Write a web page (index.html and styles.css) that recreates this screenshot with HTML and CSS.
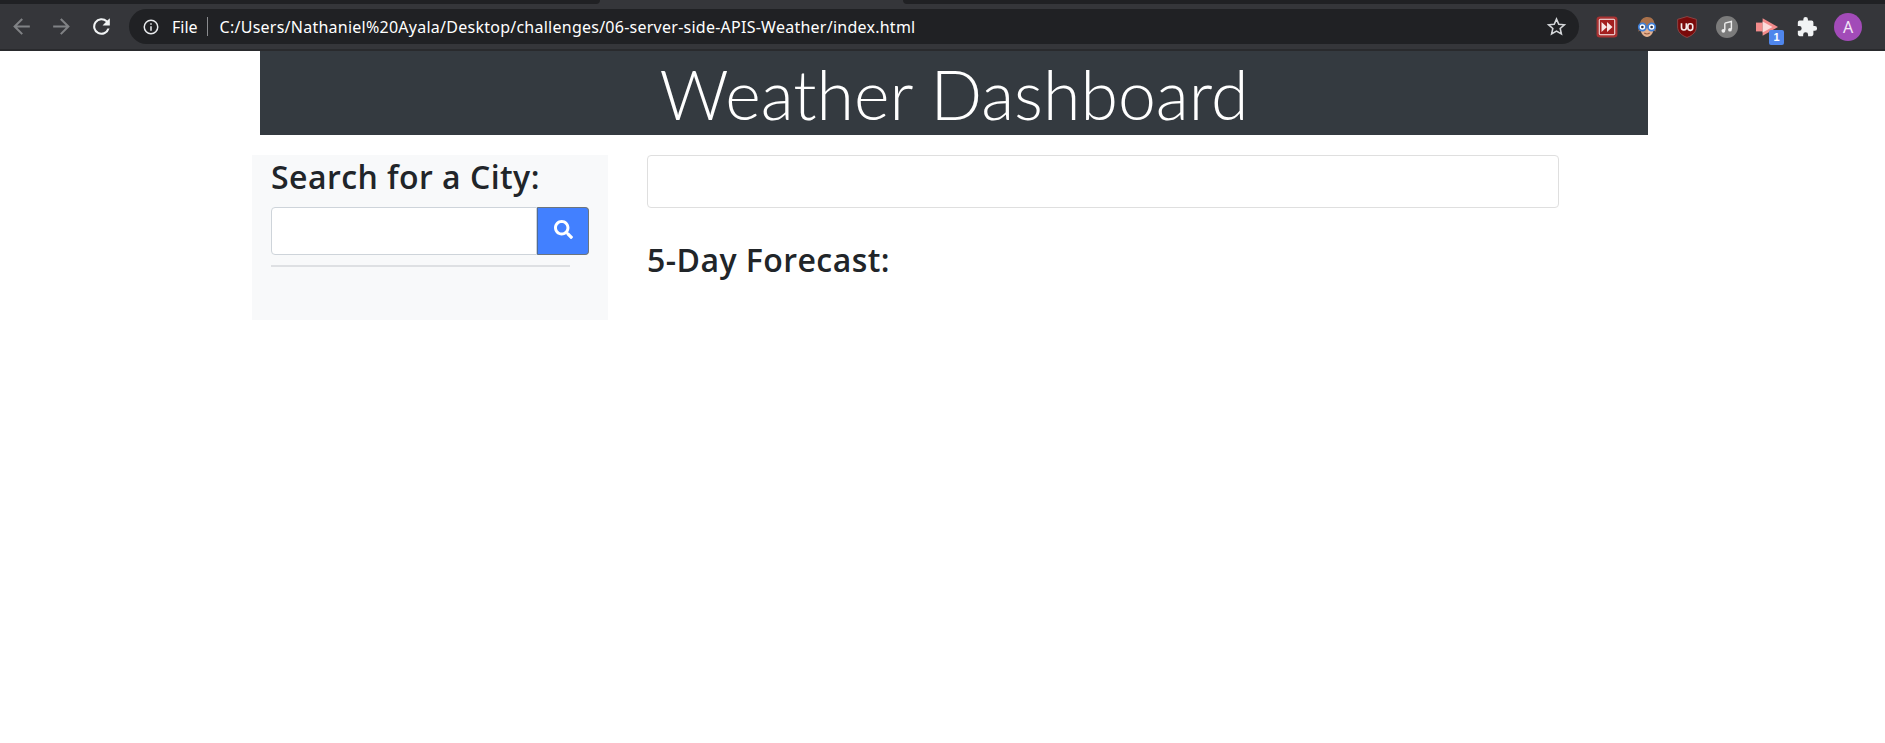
FILE: index.html
```html
<!DOCTYPE html>
<html lang="en">
<head>
    <meta charset="UTF-8">
    <title>Weather Dashboard</title>
    <link rel="stylesheet" href="styles.css">
</head>
<body>
    <div class="tabstrip">
        <div class="tab-side left"></div>
        <div class="tab-side right"></div>
    </div>
    <div class="toolbar">
        <svg class="nav-icon dim" viewBox="0 0 24 24"><path d="M20 11H7.8l5.6-5.6L12 4l-8 8 8 8 1.4-1.4L7.8 13H20z"/></svg>
        <svg class="nav-icon dim" viewBox="0 0 24 24"><path d="M4 11h12.2l-5.6-5.6L12 4l8 8-8 8-1.4-1.4 5.6-5.6H4z"/></svg>
        <svg class="nav-icon" viewBox="0 0 24 24"><path d="M17.65 6.35A8 8 0 1 0 19.73 14h-2.08a6 6 0 1 1-1.41-6.24L13 11h7V4z"/></svg>
        <div class="omnibox">
            <svg class="info-icon" viewBox="0 0 24 24"><path d="M11 7h2v2h-2zm0 4h2v6h-2zm1-9a10 10 0 1 0 0 20 10 10 0 0 0 0-20zm0 18a8 8 0 1 1 0-16 8 8 0 0 1 0 16z"/></svg>
            <span class="scheme">File</span>
            <span class="divider"></span>
            <span class="url">C:/Users/Nathaniel%20Ayala/Desktop/challenges/06-server-side-APIS-Weather/index.html</span>
            <svg class="star-icon" viewBox="0 0 24 24"><path d="M12 3.5l2.6 5.9 6.4.6-4.8 4.2 1.4 6.3L12 17.2l-5.6 3.3 1.4-6.3L3 10l6.4-.6z"/></svg>
        </div>
        <div class="extensions">
            <svg class="ext" viewBox="0 0 20 20"><rect x="0.5" y="0.5" width="19" height="19" rx="3" fill="#a83232"/><rect x="2.5" y="2.5" width="15" height="15" rx="1.5" fill="#f3dede"/><rect x="3.5" y="3.5" width="13" height="13" fill="#a31f1f"/><path d="M5 5.5l5 4.5-5 4.5z M10 5.5l5 4.5-5 4.5z" fill="#f7e6e6"/></svg>
            <svg class="ext" viewBox="0 0 20 20"><path d="M3.5 9C3.5 3 7 1 10.5 1c4 0 6.500 3 6.500 8l1 5-3-1H5l-3 1z" fill="#a9714b"/><path d="M4 11c0 5 3 8 6 8s6-3 6-8z" fill="#e3b08f"/><circle cx="5.8" cy="10" r="3.3" fill="#fff" stroke="#3f7fd8" stroke-width="1.6"/><circle cx="14.2" cy="10" r="3.3" fill="#fff" stroke="#3f7fd8" stroke-width="1.6"/><circle cx="5.8" cy="10" r="1.2" fill="#334"/><circle cx="14.2" cy="10" r="1.2" fill="#334"/><path d="M7.5 15.500c1.500 1 3.500 1 5 0" fill="none" stroke="#9b5f44" stroke-width="1"/></svg>
            <svg class="ext" viewBox="0 0 20 20"><path d="M10 .5L18.500 3v7c0 4-3 7.500-8.500 9.500C4.500 17.500 1.500 14 1.500 10V3z" fill="#7a0a0a" stroke="#8f4a4a" stroke-width=".8"/><path d="M5 6.500v4a2.200 2.200 0 0 0 4.400 0v-4" fill="none" stroke="#f5eded" stroke-width="1.500"/><rect x="10.800" y="7" width="4.400" height="6" rx="2" fill="none" stroke="#f5eded" stroke-width="1.500"/></svg>
            <svg class="ext" viewBox="0 0 20 20"><circle cx="10" cy="10" r="10" fill="#7b7b7b"/><path d="M8 6.500l6-1.500v7" fill="none" stroke="#eee" stroke-width="1.300"/><path d="M8 6.500V13" stroke="#eee" stroke-width="1.300"/><circle cx="6.700" cy="13.500" r="1.700" fill="#eee"/><circle cx="12.700" cy="12.500" r="1.700" fill="#eee"/></svg>
            <div class="ext-badged">
                <svg class="ext" viewBox="0 0 20 20"><path d="M0 6h6v8H0z" fill="#f28b8b"/><path d="M6 2l14 8-14 8z" fill="#f28b8b"/><path d="M6 5l9 5-9 5z" fill="#fbdcdc"/></svg>
                <span class="badge">1</span>
            </div>
            <svg class="ext" viewBox="0 0 24 24"><path fill="#f1f3f4" d="M20.500 11H19V7a2 2 0 0 0-2-2h-4V3.500a2.500 2.500 0 0 0-5 0V5H4a2 2 0 0 0-2 2v3.800h1.500a2.700 2.700 0 0 1 0 5.400H2V20a2 2 0 0 0 2 2h3.800v-1.500a2.700 2.700 0 0 1 5.400 0V22H17a2 2 0 0 0 2-2v-4h1.500a2.500 2.500 0 0 0 0-5z"/></svg>
            <span class="avatar">A</span>
        </div>
    </div>

    <div class="page">
        <header class="banner">
            <h1>Weather Dashboard</h1>
        </header>
        <div class="content">
            <aside class="sidebar">
                <h3>Search for a City:</h3>
                <div class="search-group">
                    <input type="text" class="search-input">
                    <button class="search-btn">
                        <svg viewBox="0 0 512 512"><path fill="#fff" d="M505 442.700L405.300 343c-4.500-4.500-10.600-7-17-7H372c27.600-35.300 44-79.700 44-128C416 93.100 322.900 0 208 0S0 93.100 0 208s93.100 208 208 208c48.300 0 92.700-16.400 128-44v16.300c0 6.400 2.500 12.500 7 17l99.700 99.700c9.400 9.400 24.600 9.400 33.900 0l28.300-28.300c9.400-9.400 9.400-24.600.1-34zM208 336c-70.700 0-128-57.200-128-128 0-70.700 57.200-128 128-128 70.700 0 128 57.200 128 128 0 70.700-57.200 128-128 128z"/></svg>
                    </button>
                </div>
                <hr class="rule">
            </aside>
            <main class="forecast">
                <div class="today-card"></div>
                <h3 class="forecast-title">5-Day Forecast:</h3>
            </main>
        </div>
    </div>
</body>
</html>
```

FILE: styles.css
```css
html, body {
    margin: 0;
    padding: 0;
    background: #fff;
    overflow: hidden;
}
body {
    font-family: 'Open Sans', 'Noto Sans', sans-serif;
    color: #212529;
    height: 743px;
}

/* browser chrome */
.tabstrip {
    height: 4px;
    background: #35363a;
    display: flex;
    justify-content: space-between;
}
.tab-side {
    height: 4px;
    background: #202124;
}
.tab-side.left {
    width: 600px;
    border-bottom-right-radius: 4px;
}
.tab-side.right {
    width: 982px;
    border-bottom-left-radius: 4px;
}
.toolbar {
    height: 45px;
    box-sizing: border-box;
    padding: 5px 0 5px 9px;
    background: #35363a;
    display: flex;
    align-items: center;
}
.nav-icon {
    width: 25px;
    height: 25px;
    fill: #f1f3f4;
    margin-right: 15px;
    flex: none;
}
.nav-icon.dim {
    fill: #808285;
}
.omnibox {
    width: 1450px;
    height: 35px;
    box-sizing: border-box;
    padding: 0 12px 0 13px;
    border-radius: 18px;
    background: #202124;
    display: flex;
    align-items: center;
    color: #fff;
    font-family: 'Noto Sans', sans-serif;
    font-size: 16px;
    flex: none;
}
.info-icon {
    width: 18px;
    height: 18px;
    fill: #e8eaed;
    margin-right: 12px;
}
.divider {
    width: 1px;
    height: 19px;
    background: #8a8b8e;
    margin: 0 12px 0 9px;
}
.url {
    flex: 1;
    white-space: nowrap;
    letter-spacing: .25px;
}
.star-icon {
    width: 21px;
    height: 21px;
    fill: none;
    stroke: #d5d7da;
    stroke-width: 1.8;
}
.extensions {
    display: flex;
    align-items: center;
    gap: 18px;
    margin-left: 17px;
}
.ext {
    width: 22px;
    height: 22px;
    display: block;
}
.ext-badged {
    position: relative;
}
.badge {
    position: absolute;
    right: -6px;
    bottom: -7px;
    width: 15px;
    height: 15px;
    border-radius: 2px;
    background: #4f86ec;
    color: #fff;
    font: bold 11px/15px 'Liberation Sans', sans-serif;
    text-align: center;
}
.avatar {
    width: 28px;
    height: 28px;
    margin-left: -2px;
    border-radius: 50%;
    background: #a24bb8;
    color: #f3e6f7;
    font: 16px/28px 'Noto Sans', sans-serif;
    text-align: center;
}

/* page */
.page {
    border-top: 2px solid #292a2d;
}
.banner {
    width: 1388px;
    height: 84px;
    margin-left: 260px;
    background: #343a40;
    color: #fff;
    text-align: center;
}
.banner h1 {
    margin: 0;
    padding-top: 2px;
    font-family: 'Lato', sans-serif;
    font-size: 68px;
    font-weight: 300;
    line-height: 82px;
}
.content {
    display: flex;
    padding: 20px 0 0 252px;
}
.sidebar {
    width: 356px;
    height: 165px;
    box-sizing: border-box;
    padding: 0 19px;
    background: #f8f9fa;
}
.sidebar h3, .forecast-title {
    margin: 0;
    font-size: 32px;
    font-weight: 600;
    line-height: 44px;
    letter-spacing: .45px;
}
.search-group {
    display: flex;
    margin-top: 8px;
    height: 48px;
}
.search-input {
    width: 267px;
    box-sizing: border-box;
    border: 1px solid #ced4da;
    border-radius: 4px 0 0 4px;
    background: #fff;
}
.search-btn {
    width: 52px;
    padding: 0 0 4px;
    border: 1px solid #6c757d;
    border-left-color: #4f6b96;
    border-radius: 0 4px 4px 0;
    background: #4280ff;
    display: flex;
    align-items: center;
    justify-content: center;
}
.search-btn svg {
    width: 19px;
    height: 19px;
}
.rule {
    width: 299px;
    height: 2px;
    margin: 10px 0 0;
    border: 0;
    background: #dee0e3;
}
.forecast {
    margin-left: 39px;
    width: 912px;
}
.today-card {
    height: 53px;
    box-sizing: border-box;
    border: 1px solid #dfdfdf;
    border-radius: 4px;
}
.forecast-title {
    margin-top: 30px;
}
```
